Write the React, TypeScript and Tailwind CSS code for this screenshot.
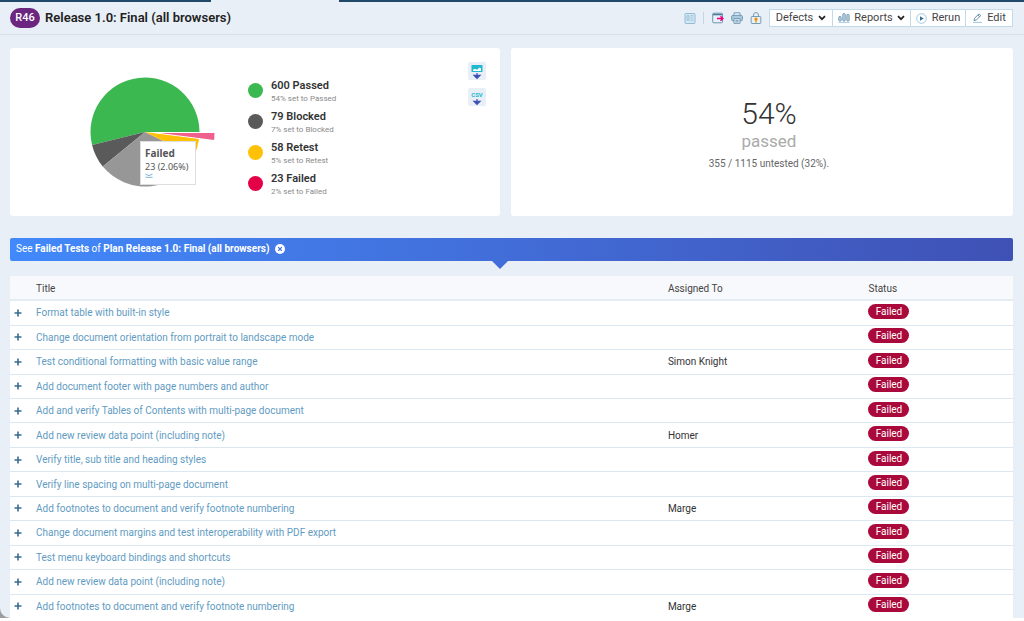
import React from "react";

type Legend = { count: number; name: string; percent: number; dot: string };
type TestRow = { title: string; assignedTo?: string };

const legends: Legend[] = [
  { count: 600, name: "Passed", percent: 54, dot: "bg-[#3cb850]" },
  { count: 79, name: "Blocked", percent: 7, dot: "bg-[#5a5a5a]" },
  { count: 58, name: "Retest", percent: 5, dot: "bg-[#ffc107]" },
  { count: 23, name: "Failed", percent: 2, dot: "bg-[#e40046]" },
];

const tests: TestRow[] = [
  { title: "Format table with built-in style" },
  { title: "Change document orientation from portrait to landscape mode" },
  { title: "Test conditional formatting with basic value range", assignedTo: "Simon Knight" },
  { title: "Add document footer with page numbers and author" },
  { title: "Add and verify Tables of Contents with multi-page document" },
  { title: "Add new review data point (including note)", assignedTo: "Homer" },
  { title: "Verify title, sub title and heading styles" },
  { title: "Verify line spacing on multi-page document" },
  { title: "Add footnotes to document and verify footnote numbering", assignedTo: "Marge" },
  { title: "Change document margins and test interoperability with PDF export" },
  { title: "Test menu keyboard bindings and shortcuts" },
  { title: "Add new review data point (including note)" },
  { title: "Add footnotes to document and verify footnote numbering", assignedTo: "Marge" },
];

// Slices run counterclockwise, starting at three o'clock
const slices = [
  { value: 600, color: "#3cb850", pull: 0 },
  { value: 79, color: "#5a5a5a", pull: 0 },
  { value: 355, color: "#979797", pull: 0 },
  { value: 58, color: "#ffc107", pull: 0 },
  { value: 23, color: "#f0608c", pull: 15 },
];

const slicePath = (from: number, to: number, pull: number) => {
  const r = 54.5;
  const mid = (from + to) / 2;
  const cx = 55 + pull * Math.cos(mid);
  const cy = 55 - pull * Math.sin(mid);
  const large = to - from > Math.PI ? 1 : 0;
  return `M${cx} ${cy}L${cx + r * Math.cos(from)} ${cy - r * Math.sin(from)}A${r} ${r} 0 ${large} 0 ${
    cx + r * Math.cos(to)
  } ${cy - r * Math.sin(to)}Z`;
};

const PieChart: React.FC = () => {
  const total = slices.reduce((sum, s) => sum + s.value, 0);
  let angle = 0;
  return (
    <svg width="126" height="110" viewBox="0 0 126 110" role="img" aria-label="Test results">
      {slices.map((slice) => {
        const from = angle;
        angle += (slice.value / total) * Math.PI * 2;
        return <path key={slice.color} d={slicePath(from, angle, slice.pull)} fill={slice.color} />;
      })}
    </svg>
  );
};

const ChevronIcon = () => (
  <svg width="8" height="6" viewBox="0 0 8 6" fill="none" stroke="#222" strokeWidth="1.7">
    <path d="M1 1.2l3 3 3-3" />
  </svg>
);

const ReportsIcon = () => (
  <svg width="12" height="10" viewBox="0 0 12 10" fill="#d3e6f3" stroke="#5685a3" strokeWidth="0.9">
    <rect x="0.9" y="3.5" width="2.2" height="4.5" rx="0.8" />
    <rect x="4.9" y="0.6" width="2.2" height="7.4" rx="0.8" />
    <rect x="8.9" y="1.4" width="2.2" height="6.6" rx="0.8" />
    <path d="M0.5 9.5h11" stroke="#a5cbe3" />
  </svg>
);

const RerunIcon = () => (
  <svg width="11" height="11" viewBox="0 0 11 11" fill="none">
    <circle cx="5.5" cy="5.5" r="4.8" stroke="#9ec7e0" />
    <path d="M4 3.3l3.8 2.2L4 7.7z" fill="#336f99" />
  </svg>
);

const EditIcon = () => (
  <svg width="11" height="10" viewBox="0 0 11 10" fill="none" stroke="#56859f" strokeWidth="0.9">
    <path d="M2 7.6l.6-2.4L7 .9l1.8 1.7-4.4 4.3L2 7.6zM5.9 2l1.8 1.7" />
    <path d="M1 9.4h8.8" stroke="#91bfdc" />
  </svg>
);

const ToolIcons = () => (
  <div className="flex items-center">
    <button aria-label="Toggle details">
      <svg width="12" height="11" viewBox="0 0 12 11" fill="#d5e7f3" stroke="#91bcd8">
        <rect x="1" y="0.5" width="10" height="10" rx="0.8" />
        <path d="M3 2.8h2v4.4H3zM6.5 2.8H9.4M6.5 5H9.4M6.5 7.2h2.9" strokeWidth="0.9" />
      </svg>
    </button>
    <span className="ml-[7px] mr-2 h-3 w-px bg-[#c2d7e5]" />
    <button aria-label="Export">
      <svg width="12" height="12" viewBox="0 0 12 12" fill="none">
        <rect x="0.7" y="1.2" width="9.8" height="9.6" rx="1" fill="#e8f1f8" stroke="#6b95b0" />
        <path d="M1 2.6h9.4" stroke="#497a9a" strokeWidth="1.4" />
        <path d="M5 6.5h5.5M8.5 4.3L11 6.5 8.5 8.7" stroke="#ed0080" strokeWidth="1.4" />
      </svg>
    </button>
    <button aria-label="Print" className="ml-[7px]">
      <svg width="12" height="12" viewBox="0 0 12 12" fill="#e8f1f8" stroke="#6a94af" strokeWidth="0.9">
        <path d="M3 3.4V.8h6v2.6" />
        <rect x="0.6" y="3.4" width="10.8" height="5.4" rx="1.3" fill="#a9cadf" />
        <path d="M3 6.6h6v4.8H3zM4.4 8.3h3.2M4.4 9.8h3.2" />
      </svg>
    </button>
    <button aria-label="Lock" className="ml-[7px]">
      <svg width="12" height="12" viewBox="0 0 12 12" fill="none" stroke="#779db6">
        <path d="M3.5 4.5V3a2.4 2.4 0 014.9 0v1.5" />
        <rect x="1.2" y="4.5" width="9.6" height="7" rx="0.8" fill="#e5f0f7" />
        <circle cx="6" cy="7" r="1.6" fill="#f38a00" stroke="none" />
        <path d="M6 7v3.4" stroke="#f38a00" strokeWidth="1.4" />
      </svg>
    </button>
  </div>
);

const DownloadArrow = () => (
  <path d="M9 11v5.5M6 13.4h6L9 16.3z" fill="#3f51b5" stroke="#3f51b5" strokeWidth="1.2" />
);

const Header: React.FC = () => (
  <header className="flex h-[33px] items-center border-b border-[#d7e2eb] pl-[10px] pr-[11px]">
    <span className="flex h-5 w-[30px] items-center justify-center rounded-full bg-[#6b267f] pt-px text-[11px] font-medium text-white">
      R46
    </span>
    <h1 className="ml-[5px] text-[13px] font-semibold text-[#222]">Release 1.0: Final (all browsers)</h1>
    <div className="ml-auto flex items-center gap-[7px]">
      <ToolIcons />
      <div className="flex h-[18px] divide-x divide-[#c2dbea] border border-[#c2dbea] bg-white text-[11px] text-[#444]">
        <button className="flex w-[63px] items-center justify-center gap-[5px]">
          Defects <ChevronIcon />
        </button>
        <button className="flex w-[78px] items-center justify-center gap-1">
          <ReportsIcon /> Reports <ChevronIcon />
        </button>
        <button className="flex w-[55px] items-center justify-center gap-[5px]">
          <RerunIcon /> Rerun
        </button>
        <button className="flex w-[46px] items-center justify-center gap-1">
          <EditIcon /> Edit
        </button>
      </div>
    </div>
  </header>
);

const ChartCard: React.FC = () => (
  <section className="flex h-[168px] rounded-[3px] bg-white">
    <div className="relative ml-20 mt-[29px] h-[110px] w-[126px]">
      <PieChart />
      <div className="absolute left-[50px] top-[64px] h-[44px] w-[56px] border border-[#dedede] bg-white pl-1 pt-[5px] font-['Noto_Sans',sans-serif] text-[10px] leading-[13px] whitespace-nowrap text-[#555]">
        <p className="font-bold">Failed</p>
        <p className="text-[9px]">23 (2.06%)</p>
        <svg width="8" height="5" viewBox="0 0 8 5" fill="none" stroke="#75abd2" strokeWidth="0.9">
          <path d="M.5 1.2Q4 4 7.5 1.2M.5 4.3h7" />
        </svg>
      </div>
    </div>
    <ul className="ml-8 mt-[31px]">
      {legends.map((item) => (
        <li key={item.name} className="flex h-[31px] items-start">
          <span className={`mr-2 mt-1 size-[15px] rounded-full ${item.dot}`} />
          <div>
            <p className="text-[11px] leading-[14px] font-semibold text-[#333]">
              {item.count} {item.name}
            </p>
            <p className="text-[8px] leading-3 text-[#8a8a8a]">
              {item.percent}% set to {item.name}
            </p>
          </div>
        </li>
      ))}
    </ul>
    <div className="ml-auto mr-[14px] mt-[14px] flex flex-col gap-2">
      <button aria-label="Download image" className="size-[18px] rounded-[2px] bg-[#e8eff7]">
        <svg width="18" height="18" viewBox="0 0 18 18">
          <rect x="3.5" y="3" width="11" height="7" rx="0.5" fill="#20b9d0" />
          <path d="M5 9V7.8l2-1 2 1 2.5-2.2L13 6.5V9z" fill="#fff" />
          <DownloadArrow />
        </svg>
      </button>
      <button aria-label="Download CSV" className="size-[18px] rounded-[2px] bg-[#e8eff7]">
        <svg width="18" height="18" viewBox="0 0 18 18">
          <text x="9" y="8.5" textAnchor="middle" fontSize="6" fontWeight="700" fill="#20b9d0">
            CSV
          </text>
          <DownloadArrow />
        </svg>
      </button>
    </div>
  </section>
);

const SummaryCard: React.FC = () => (
  <section className="flex h-[168px] flex-col items-center rounded-[3px] bg-white pl-[14px] pt-[48px]">
    <p className="text-[30px] leading-[35px] font-light text-[#333]">54%</p>
    <p className="text-[17px] leading-5 text-[#aaa]">passed</p>
    <p className="mt-[6px] text-[10px] leading-[14px] text-[#666]">355 / 1115 untested (32%).</p>
  </section>
);

const FilterBanner: React.FC = () => (
  <div className="relative mt-[22px] flex h-[23px] items-center rounded-[2px] bg-linear-to-r from-[#4189fb] to-[#3f51b5] px-[6px] text-[10px] text-white">
    <p className="pb-[3px]">
      See <b>Failed Tests</b> of <b>Plan Release 1.0: Final (all browsers)</b>
    </p>
    <button aria-label="Clear filter" className="ml-[6px] pb-[2px]">
      <svg width="10" height="10" viewBox="0 0 10 10">
        <circle cx="5" cy="5" r="5" fill="#fff" />
        <path d="M3.2 3.2l3.6 3.6M6.8 3.2L3.2 6.8" stroke="#416bd9" strokeWidth="1.2" />
      </svg>
    </button>
    <span className="absolute left-[482px] top-full border-x-8 border-t-8 border-x-transparent border-t-[#416cdb]" />
  </div>
);

const TestTable: React.FC = () => (
  <table className="mt-[15px] h-[342px] w-full table-fixed bg-white text-left text-[10px] leading-[14px] text-[#333]">
    <thead>
      <tr className="h-6 border-b-2 border-[#e5edf4] bg-[#f8f9fd] text-[#444]">
        <th className="w-[26px]" aria-label="Expand" />
        <th className="w-[63%] pt-[2px] font-normal">Title</th>
        <th className="w-1/5 pt-[2px] font-normal">Assigned To</th>
        <th className="pt-[2px] font-normal">Status</th>
      </tr>
    </thead>
    <tbody>
      {tests.map((test, index) => (
        <tr key={index} className="border-b border-[#dce8f1] last:border-b-0">
          <td>
            <button aria-label="Expand test" className="ml-1 block">
              <svg width="8" height="8" viewBox="0 0 8 8" stroke="#376c8f" strokeWidth="1.6">
                <path d="M4 .5v7M.5 4h7" />
              </svg>
            </button>
          </td>
          <td className="pt-px">
            <a href="#" className="text-[#629bc2]">
              {test.title}
            </a>
          </td>
          <td className="pt-px">{test.assignedTo}</td>
          <td>
            <span className="mb-[3px] flex h-[15px] w-[41px] items-center justify-center rounded-full bg-[#a90a3b] pt-px text-white">
              Failed
            </span>
          </td>
        </tr>
      ))}
    </tbody>
  </table>
);

export default function App() {
  return (
    <div className="min-h-screen bg-white font-[Roboto,'Liberation_Sans',sans-serif]">
      <div className="bg-[#9c9c9c]">
        <div className="rounded-bl-[10px] bg-[#e8eff7]">
          <div className="flex h-[2px]">
            <div className="w-[211px] bg-[#204868]" />
            <div className="w-32" />
            <div className="flex-1 bg-[#204868]" />
          </div>
          <Header />
          <main className="pl-[10px] pr-[11px] pt-[13px]">
            <div className="grid grid-cols-[490fr_502fr] gap-[11px]">
              <ChartCard />
              <SummaryCard />
            </div>
            <FilterBanner />
            <TestTable />
          </main>
        </div>
      </div>
    </div>
  );
}
